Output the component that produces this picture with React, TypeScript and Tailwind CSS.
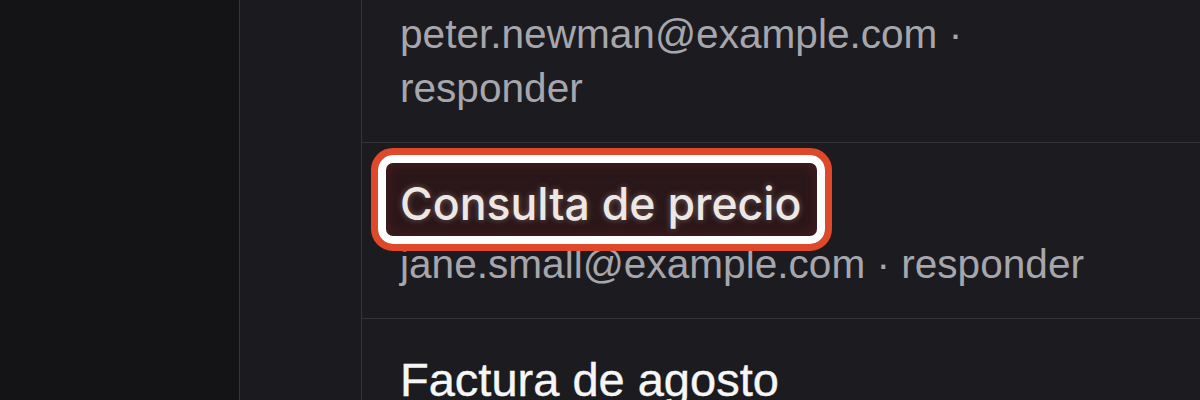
const messages = [
  { id: 1, subject: "", from: "peter.newman@example.com", action: "responder" },
  { id: 2, subject: "Consulta de precio", from: "jane.small@example.com", action: "responder", highlighted: true },
  { id: 3, subject: "Factura de agosto", from: "mark.price@example.com", action: "responder" },
];

function Highlight({ children }: { children: React.ReactNode }) {
  return (
    <span className="relative inline-block">
      <span className="absolute -left-[29px] -right-[30px] -top-[28px] -bottom-[19px] rounded-[22px] border-[7px] border-[#e0482a]">
        <span className="block h-full w-full rounded-[15px] border-[8px] border-white bg-[#2a1719] shadow-[inset_0_0_14px_rgba(120,40,40,0.45)]" />
      </span>
      <span className="relative font-['Inter',sans-serif] text-[44.6px] font-medium text-[#ece8e6] [-webkit-text-stroke:0] [text-shadow:0_0_6px_rgba(255,220,210,0.35)]">
        {children}
      </span>
    </span>
  );
}

export default function App() {
  return (
    <div className="flex h-[400px] w-[1200px] overflow-hidden bg-[#141416] font-['Liberation_Sans',Arial,sans-serif]">
      <aside className="w-[240px] shrink-0 border-r border-[#34343a] bg-[#141416]" />
      <nav className="w-[122px] shrink-0 border-r border-[#34343a] bg-[#1b1b1f]" />
      <main className="flex-1 bg-[#1c1c20]">
        {messages.map((m, i) => (
          <div
            key={m.id}
            className={`border-b border-[#34343a] pl-[38px] pb-[27px] ${i === 0 ? "pt-[7px]" : "pt-[33px]"}`}
          >
            {m.subject && (
              <div className="h-[56px] text-[47px] leading-[56px] text-[#f6f6f6] [-webkit-text-stroke:0.4px_#f6f6f6]">
                {m.highlighted ? <Highlight>{m.subject}</Highlight> : m.subject}
              </div>
            )}
            <p className={`max-w-[720px] text-[40.6px] leading-[54px] text-[#a6a6ac] ${m.subject ? "mt-[5px]" : ""}`}>
              {m.from} · {m.action}
            </p>
          </div>
        ))}
      </main>
    </div>
  );
}
